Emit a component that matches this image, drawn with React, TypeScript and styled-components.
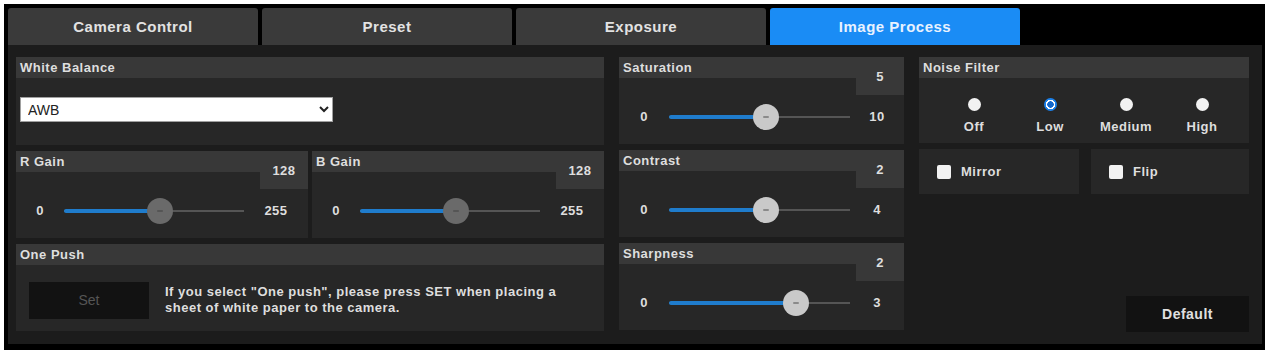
import styled, { createGlobalStyle } from "styled-components";

const GlobalStyle = createGlobalStyle`
  body {
    margin: 0;
    background: #ffffff;
    font-family: "Liberation Sans", Arial, sans-serif;
  }
`;

const tabs = ["Camera Control", "Preset", "Exposure", "Image Process"];

type SliderProps = {
  title: string;
  value: number;
  min: number;
  max: number;
  light?: boolean;
  cols: string;
};

const Slider = ({ title, value, min, max, light, cols }: SliderProps) => {
  const f = (value - min) / (max - min);
  return (
    <SliderPanel>
      <SliderTitle>{title}</SliderTitle>
      <ValueBox>{value}</ValueBox>
      <SliderRow $cols={cols}>
        <RangeLabel>{min}</RangeLabel>
        <Track>
          <Fill $pos={f} />
          <Thumb $pos={f} $light={light} />
        </Track>
        <RangeLabel>{max}</RangeLabel>
      </SliderRow>
    </SliderPanel>
  );
};

export default function App() {
  return (
    <>
      <GlobalStyle />
      <Frame>
        <TabBar>
          {tabs.map((t) => (
            <Tab key={t} $active={t === "Image Process"}>
              {t}
            </Tab>
          ))}
        </TabBar>
        <Content>
          <Column $width={588}>
            <Panel $height={88}>
              <PanelHeader>White Balance</PanelHeader>
              <WbSelect defaultValue="AWB">
                <option>AWB</option>
                <option>Indoor</option>
                <option>Outdoor</option>
                <option>One Push</option>
                <option>Manual</option>
              </WbSelect>
            </Panel>
            <GainRow>
              <Slider title="R Gain" value={128} min={0} max={255} cols="48px 1fr 64px" />
              <Slider title="B Gain" value={128} min={0} max={255} cols="48px 1fr 64px" />
            </GainRow>
            <Panel $height={87}>
              <PanelHeader>One Push</PanelHeader>
              <OnePushBody>
                <SetButton disabled>Set</SetButton>
                <HelpText>
                  If you select "One push", please press SET when placing a
                  <br />
                  sheet of white paper to the camera.
                </HelpText>
              </OnePushBody>
            </Panel>
          </Column>

          <Column $width={285}>
            <Slider title="Saturation" value={5} min={0} max={10} light cols="50px 1fr 54px" />
            <Slider title="Contrast" value={2} min={0} max={4} light cols="50px 1fr 54px" />
            <Slider title="Sharpness" value={2} min={0} max={3} light cols="50px 1fr 54px" />
          </Column>

          <Column $width={330}>
            <Panel $height={86}>
              <PanelHeader>Noise Filter</PanelHeader>
              <RadioGrid>
                {["Off", "Low", "Medium", "High"].map((n) => (
                  <RadioItem key={n}>
                    <Radio type="radio" name="nf" defaultChecked={n === "Low"} />
                    {n}
                  </RadioItem>
                ))}
              </RadioGrid>
            </Panel>
            <CheckRow>
              <CheckPanel>
                <Check type="checkbox" />
                Mirror
              </CheckPanel>
              <CheckPanel>
                <Check type="checkbox" />
                Flip
              </CheckPanel>
            </CheckRow>
            <DefaultButton>Default</DefaultButton>
          </Column>
        </Content>
      </Frame>
    </>
  );
}

const Frame = styled.div`
  box-sizing: border-box;
  width: 1261px;
  height: 346px;
  margin: 4px 0 0 4px;
  padding: 4px 3px 6px 4px;
  background: #000;
  display: flex;
  flex-direction: column;
`;

const TabBar = styled.div`
  display: flex;
  gap: 4px;
  height: 37px;
  flex-shrink: 0;
`;

const Tab = styled.div<{ $active?: boolean }>`
  width: 250px;
  display: flex;
  align-items: center;
  justify-content: center;
  border-radius: 3px 3px 0 0;
  background: ${({ $active }) => ($active ? "#1a8cf5" : "#3a3a3a")};
  color: ${({ $active }) => ($active ? "#e8f2ff" : "#e2e2e2")};
  font-weight: 700;
  font-size: 15px;
  letter-spacing: 0.5px;
`;

const Content = styled.div`
  flex: 1;
  display: flex;
  gap: 15px;
  padding: 12px 12px 12px 8px;
  background: #1c1c1c;
  color: #dedede;
  font-size: 13px;
  letter-spacing: 0.5px;
`;

const Column = styled.div<{ $width: number }>`
  width: ${({ $width }) => $width}px;
  flex-shrink: 0;
  display: flex;
  flex-direction: column;
  gap: 6px;
`;

const Panel = styled.div<{ $height: number }>`
  height: ${({ $height }) => $height}px;
  background: #272727;
  display: flex;
  flex-direction: column;
`;

const PanelHeader = styled.div`
  height: 21px;
  line-height: 21px;
  padding-left: 4px;
  background: #383838;
  font-weight: 700;
  color: #dedede;
`;

const WbSelect = styled.select`
  width: 313px;
  height: 25px;
  margin: 19px 0 0 4px;
  padding-left: 3px;
  border: 1px solid #a0a0a0;
  background: #fff;
  color: #222;
  font-family: "Liberation Sans", Arial, sans-serif;
  font-size: 14px;
`;

const GainRow = styled.div`
  display: grid;
  grid-template-columns: 1fr 1fr;
  gap: 4px;
`;

const SliderPanel = styled.div`
  height: 87px;
  display: grid;
  grid-template-columns: 1fr 48px;
  grid-template-rows: 21px 17px 1fr;
  background: #272727;
`;

const SliderTitle = styled.div`
  background: #383838;
  padding-left: 4px;
  line-height: 21px;
  font-weight: 700;
`;

const ValueBox = styled.div`
  grid-row: 1 / 3;
  grid-column: 2;
  background: #383838;
  display: flex;
  align-items: center;
  justify-content: center;
  font-weight: 700;
`;

const SliderRow = styled.div<{ $cols: string }>`
  grid-column: 1 / 3;
  display: grid;
  grid-template-columns: ${({ $cols }) => $cols};
  align-items: center;
  padding-bottom: 6px;
`;

const RangeLabel = styled.div`
  text-align: center;
  font-weight: 700;
`;

const Track = styled.div`
  position: relative;
  height: 2px;
  background: #555;
`;

const Fill = styled.div<{ $pos: number }>`
  position: absolute;
  left: 0;
  top: -1px;
  height: 4px;
  width: calc(${({ $pos }) => $pos * 100}% + 6px);
  background: #1f7ccc;
  border-radius: 2px;
`;

const Thumb = styled.div<{ $pos: number; $light?: boolean }>`
  position: absolute;
  top: -12px;
  left: calc(${({ $pos }) => $pos * 100}% + 6px - 13px);
  width: 26px;
  height: 26px;
  border-radius: 50%;
  background: ${({ $light }) => ($light ? "#c9c9c9" : "#6a6a6a")};
  display: flex;
  align-items: center;
  justify-content: center;

  &::after {
    content: "";
    width: 6px;
    height: 2px;
    border-radius: 1px;
    background: ${({ $light }) => ($light ? "#8a8a8a" : "#555")};
  }
`;

const OnePushBody = styled.div`
  flex: 1;
  display: flex;
  align-items: center;
  padding: 4px 12px 0 13px;
`;

const SetButton = styled.button`
  width: 120px;
  height: 37px;
  border: none;
  background: #121212;
  color: #555;
  font-family: "Liberation Sans", Arial, sans-serif;
  font-size: 14px;
`;

const HelpText = styled.div`
  margin-left: 16px;
  font-weight: 700;
  line-height: 16px;
`;

const RadioGrid = styled.div`
  display: grid;
  grid-template-columns: repeat(4, 76px);
  padding: 20px 0 0 17px;
`;

const RadioItem = styled.label`
  display: flex;
  flex-direction: column;
  align-items: center;
  gap: 8px;
  font-weight: 700;
`;

const Radio = styled.input`
  appearance: none;
  margin: 0;
  width: 13px;
  height: 13px;
  border-radius: 50%;
  background: #f2f2f2;

  &:checked {
    background: radial-gradient(circle, #1468cc 0 3px, #ffffff 3.5px 4.5px, #1a80ea 5px);
  }
`;

const CheckRow = styled.div`
  display: grid;
  grid-template-columns: 160px 1fr;
  gap: 12px;
  height: 45px;
`;

const CheckPanel = styled.label`
  display: flex;
  align-items: center;
  gap: 10px;
  padding-left: 18px;
  background: #272727;
  font-weight: 700;
`;

const Check = styled.input`
  appearance: none;
  margin: 0;
  width: 14px;
  height: 14px;
  border-radius: 2px;
  background: #f2f2f2;
`;

const DefaultButton = styled.button`
  margin-top: auto;
  align-self: flex-end;
  width: 123px;
  height: 36px;
  border: none;
  background: #121212;
  color: #e0e0e0;
  font-family: "Liberation Sans", Arial, sans-serif;
  font-weight: 700;
  font-size: 14px;
  letter-spacing: 0.5px;
`;
